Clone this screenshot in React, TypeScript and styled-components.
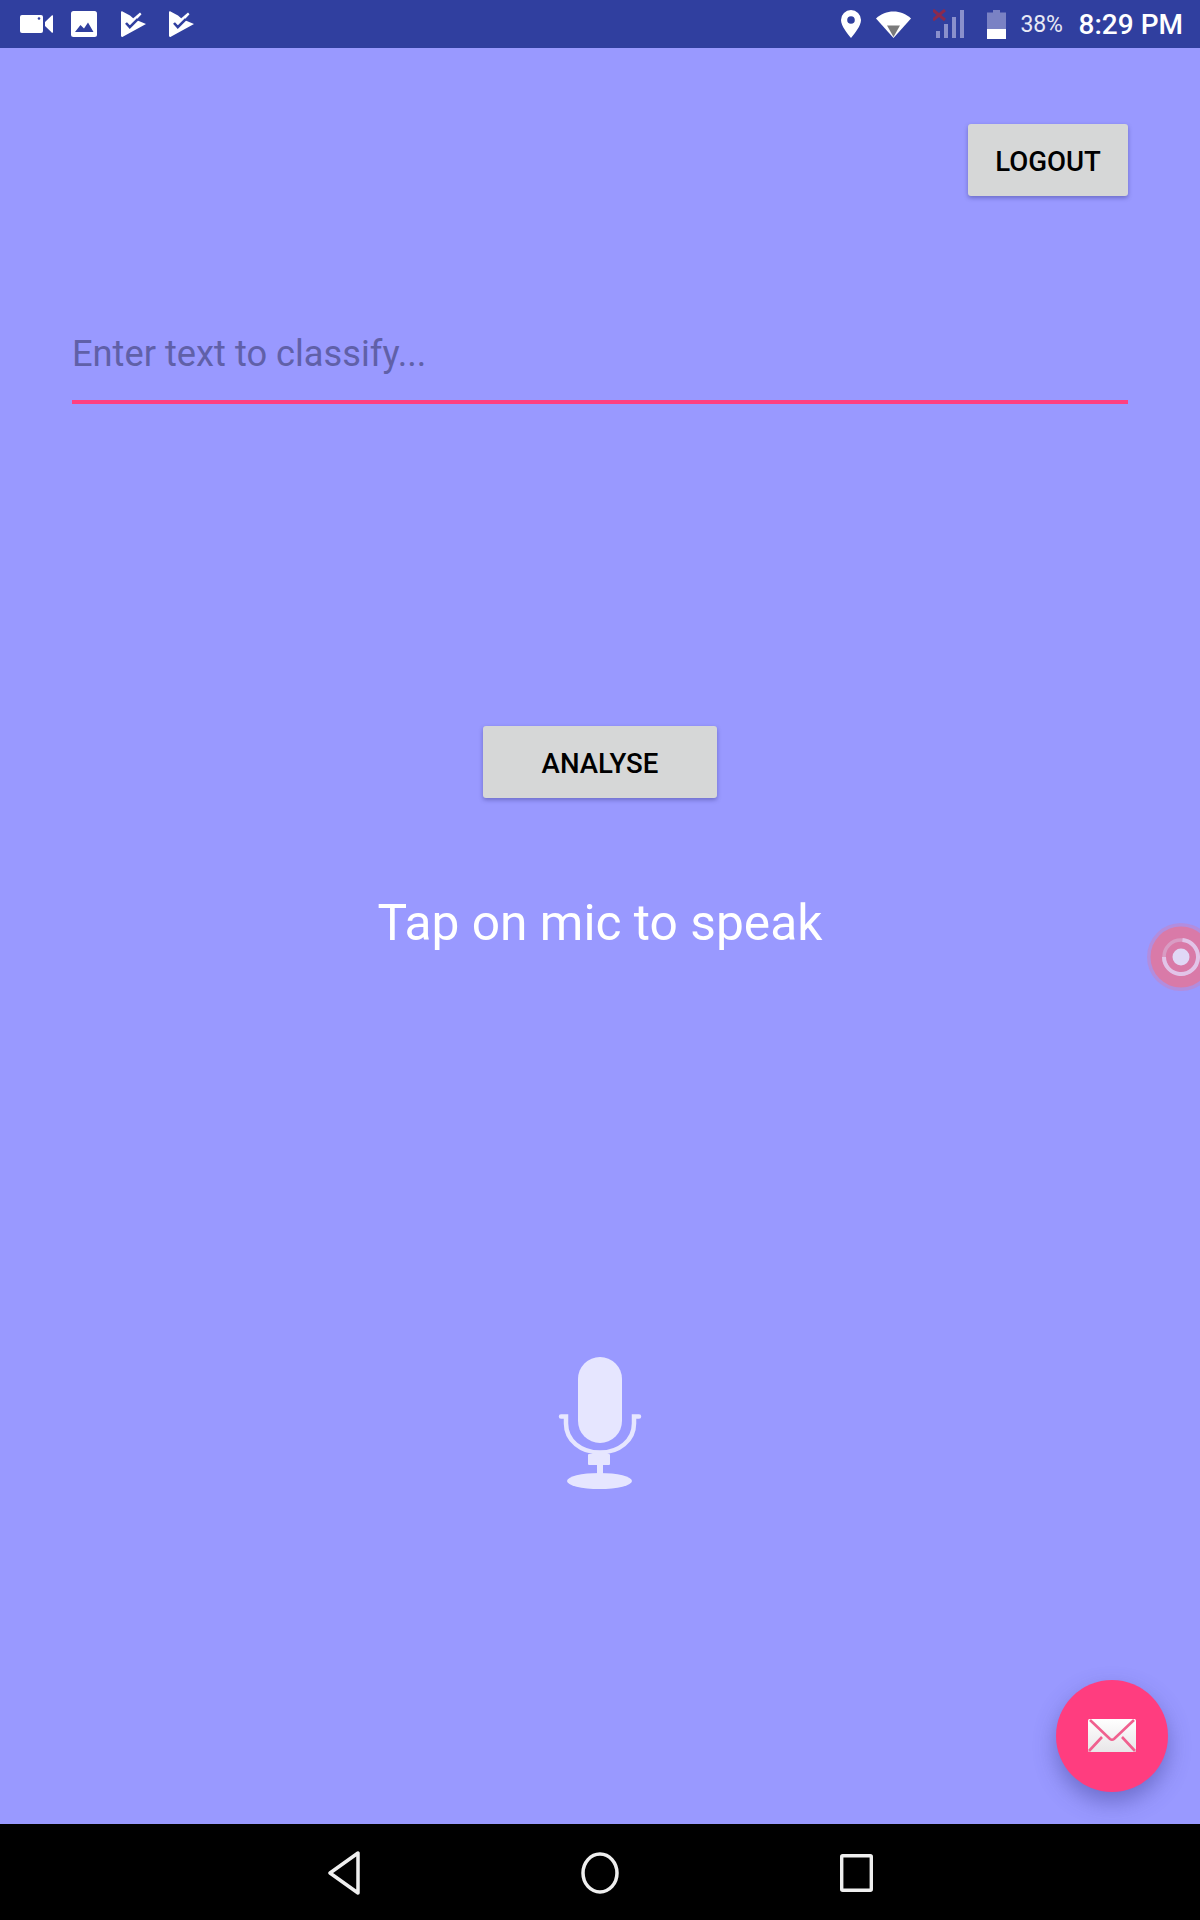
import React from "react";
import styled, { createGlobalStyle } from "styled-components";

const Global = createGlobalStyle`
  html, body { margin: 0; padding: 0; width: 1200px; height: 1920px; overflow: hidden; }
  body { font-family: Roboto, "Liberation Sans", sans-serif; background: #9999ff; }
  * { box-sizing: border-box; }
`;

const Screen = styled.div`
  width: 1200px;
  height: 1920px;
  display: flex;
  flex-direction: column;
  position: relative;
  overflow: hidden;
  background: #9999ff;
`;

const StatusBar = styled.header`
  height: 48px;
  flex: none;
  background: #303f9f;
  display: flex;
  align-items: center;
  justify-content: space-between;
  padding: 0 17px 0 20px;
`;

const IconGroup = styled.div`
  display: flex;
  align-items: center;
`;

const StatusIcon = styled.svg<{ $gap?: number }>`
  display: block;
  flex: none;
  margin-left: ${(p) => p.$gap ?? 0}px;
`;

const Percent = styled.span`
  margin-left: 14px;
  font-size: 23px;
  color: #e8e9f5;
  letter-spacing: -0.2px;
`;

const Clock = styled.span`
  margin-left: 16px;
  font-size: 28px;
  font-weight: 500;
  color: #fff;
`;

const Content = styled.main`
  flex: 1;
  display: flex;
  flex-direction: column;
  align-items: center;
  padding: 76px 72px 0;
`;

const RaisedButton = styled.button<{ $width: number; $end?: boolean }>`
  width: ${(p) => p.$width}px;
  height: 72px;
  flex: none;
  align-self: ${(p) => (p.$end ? "flex-end" : "center")};
  border: 0;
  border-radius: 3px;
  background: #d6d7d7;
  box-shadow: 0 2px 4px rgba(40, 40, 110, 0.38);
  color: #000;
  font-family: Roboto, sans-serif;
  font-size: 27.6px;
  font-weight: 500;
  padding: 2px 0 0;
`;

const TextField = styled.input`
  width: 100%;
  height: 80px;
  margin-top: 128px;
  flex: none;
  background: transparent;
  border: 0;
  border-bottom: 4px solid #ff4081;
  outline: 0;
  padding: 0 0 17px;
  font-family: Roboto, sans-serif;
  font-size: 36.25px;
  color: #000;
  &::placeholder {
    color: #6060a8;
    opacity: 1;
  }
`;

const Prompt = styled.div`
  margin-top: 97px;
  font-size: 49.7px;
  line-height: 56px;
  color: #fff;
  text-align: center;
`;

const AnalyseSlot = styled.div`
  margin-top: 322px;
  display: flex;
  justify-content: center;
  width: 100%;
`;

const MicSlot = styled.div`
  margin-top: 406px;
  display: flex;
  justify-content: center;
`;

const Fab = styled.button`
  position: absolute;
  left: 1056px;
  top: 1680px;
  width: 112px;
  height: 112px;
  border: 0;
  padding: 0;
  border-radius: 50%;
  background: #ff3d7f;
  box-shadow: 0 10px 22px rgba(50, 50, 130, 0.42);
  display: flex;
  align-items: center;
  justify-content: center;
`;

const AssistBubble = styled.svg`
  position: absolute;
  left: 1140px;
  top: 916px;
`;

const NavBar = styled.nav`
  height: 96px;
  flex: none;
  background: #000;
  display: flex;
  align-items: center;
  justify-content: center;
  gap: 221px;
  padding-top: 2px;
`;

export default function App() {
  return (
    <Screen>
      <Global />
      <StatusBar>
        <IconGroup>
          <StatusIcon width="33" height="20" viewBox="0 0 33 20">
            <path fill="#fff" d="M2 1h19a2 2 0 0 1 2 2v14a2 2 0 0 1-2 2H2a2 2 0 0 1-2-2V3a2 2 0 0 1 2-2z" />
            <circle cx="19" cy="4.500" r="1.300" fill="#303f9f" />
            <path fill="#fff" d="M25 8l6.500-6.200a.8.8 0 0 1 1.500.6v15.200a.8.8 0 0 1-1.500.6L25 12z" />
          </StatusIcon>
          <StatusIcon $gap={18} width="26" height="26" viewBox="0 0 26 26">
            <rect width="26" height="26" rx="2.500" fill="#fff" />
            <path fill="#303f9f" d="M4 21l5.500-7 3.500 3.500 4-6 5.500 9.500z" />
          </StatusIcon>
          <StatusIcon $gap={24} width="25" height="26" viewBox="0 0 25 26">
            <path fill="#fff" d="M0 1.500C0 .6.700 0 1.500.5L9 4.500 13 8 25 13 1.800 25.800C.8 26.300 0 25.700 0 24.800z" />
            <path fill="#fff" d="M12 7.500l7-6 1.500 1.800-7 7.500z" />
            <path fill="none" stroke="#303f9f" strokeWidth="2.600" d="M5 12l3.800 4.200 8-8" />
          </StatusIcon>
          <StatusIcon $gap={23} width="25" height="26" viewBox="0 0 25 26">
            <path fill="#fff" d="M0 1.500C0 .6.700 0 1.500.5L9 4.500 13 8 25 13 1.800 25.800C.8 26.300 0 25.700 0 24.800z" />
            <path fill="#fff" d="M12 7.500l7-6 1.500 1.800-7 7.500z" />
            <path fill="none" stroke="#303f9f" strokeWidth="2.600" d="M5 12l3.800 4.200 8-8" />
          </StatusIcon>
        </IconGroup>
        <IconGroup>
          <StatusIcon width="20" height="28" viewBox="0 0 20 28">
            <path fill="#fff" fillRule="evenodd" d="M10 0a10 10 0 0 1 10 10c0 6-6.500 13.500-10 18C6.500 23.500 0 16 0 10A10 10 0 0 1 10 0zm0 6.200a3.800 3.800 0 1 0 0 7.600 3.800 3.800 0 0 0 0-7.600z" />
          </StatusIcon>
          <StatusIcon $gap={15} width="35" height="27" viewBox="0 0 35 27">
            <path fill="#fff" d="M0 7.500C5 2.800 11 .5 17.500.5S30 2.800 35 7.500L17.500 27z" />
            <path fill="#7a7a7a" d="M11 14.500h13L17.500 26z" />
          </StatusIcon>
          <StatusIcon $gap={22} width="31" height="30" viewBox="0 0 31 30">
            <g fill="#8a90cc">
              <rect x="3" y="22" width="4" height="7" />
              <rect x="11" y="15" width="4" height="14" />
              <rect x="19" y="8" width="4" height="21" />
              <rect x="27" y="1" width="4" height="28" />
            </g>
            <path stroke="#8b2a4e" strokeWidth="3" fill="none" d="M0 1l12 10M12 1L0 11" />
          </StatusIcon>
          <StatusIcon $gap={23} width="19" height="29" viewBox="0 0 19 29">
            <path fill="#7a82c4" d="M6 0h7v2.500h6V19H0V2.500h6z" />
            <rect y="19" width="19" height="10" fill="#fff" />
          </StatusIcon>
          <Percent>38%</Percent>
          <Clock>8:29 PM</Clock>
        </IconGroup>
      </StatusBar>

      <Content>
        <RaisedButton $width={160} $end>LOGOUT</RaisedButton>
        <TextField placeholder="Enter text to classify..." readOnly />
        <AnalyseSlot>
          <RaisedButton $width={234}>ANALYSE</RaisedButton>
        </AnalyseSlot>
        <Prompt>Tap on mic to speak</Prompt>
        <MicSlot>
          <svg width="84" height="134" viewBox="0 0 84 134">
            <g fill="#e6e6ff">
              <rect x="20" y="0" width="44" height="86" rx="22" />
              <path fill="none" stroke="#e6e6ff" strokeWidth="4.500" strokeLinecap="round" d="M3 59.500h5v7c0 17 15 29 34 29s34-12 34-29v-7h5" />
              <rect x="30" y="97" width="22" height="11" rx="1" />
              <rect x="39" y="107" width="6" height="10" />
              <ellipse cx="41.500" cy="124" rx="32.500" ry="8" />
            </g>
          </svg>
        </MicSlot>
      </Content>

      <AssistBubble width="60" height="82" viewBox="0 0 60 82">
        <circle cx="41" cy="41" r="34" fill="#c784c2" fillOpacity="0.55" />
        <circle cx="41" cy="41" r="30.500" fill="#d97aa8" />
        <circle cx="41" cy="41" r="17" fill="none" stroke="#d99cc4" strokeWidth="3.500" />
        <circle cx="41" cy="41" r="17" fill="none" stroke="#e2c4e8" strokeWidth="4" strokeDasharray="78 29" transform="rotate(-85 41 41)" />
        <circle cx="41" cy="41" r="8.500" fill="#e0d8f6" />
      </AssistBubble>

      <Fab aria-label="Message">
        <svg width="48" height="34" viewBox="0 0 48 34">
          <defs>
            <linearGradient id="envelopeFace" x1="0" y1="0" x2="0" y2="1">
              <stop offset="0" stopColor="#ffffff" />
              <stop offset="1" stopColor="#e8e6e8" />
            </linearGradient>
          </defs>
          <rect width="48" height="33" rx="1.500" fill="url(#envelopeFace)" />
          <path fill="none" stroke="#f0608f" strokeWidth="2.600" d="M2 1l20 19q2 1.500 4 0L46 1M1 32l13-14M47 32L34 18" />
        </svg>
      </Fab>

      <NavBar>
        <svg width="32" height="44" viewBox="0 0 32 44">
          <path fill="none" stroke="#efefef" strokeWidth="3.500" strokeLinejoin="round" d="M30 2v40L2 22z" />
        </svg>
        <svg width="38" height="42" viewBox="0 0 38 42">
          <ellipse cx="19" cy="21" rx="17" ry="19" fill="none" stroke="#efefef" strokeWidth="3.500" />
        </svg>
        <svg width="33" height="38" viewBox="0 0 33 38">
          <rect x="1.700" y="1.700" width="29.600" height="34.600" rx="1" fill="none" stroke="#efefef" strokeWidth="3.400" />
        </svg>
      </NavBar>
    </Screen>
  );
}
